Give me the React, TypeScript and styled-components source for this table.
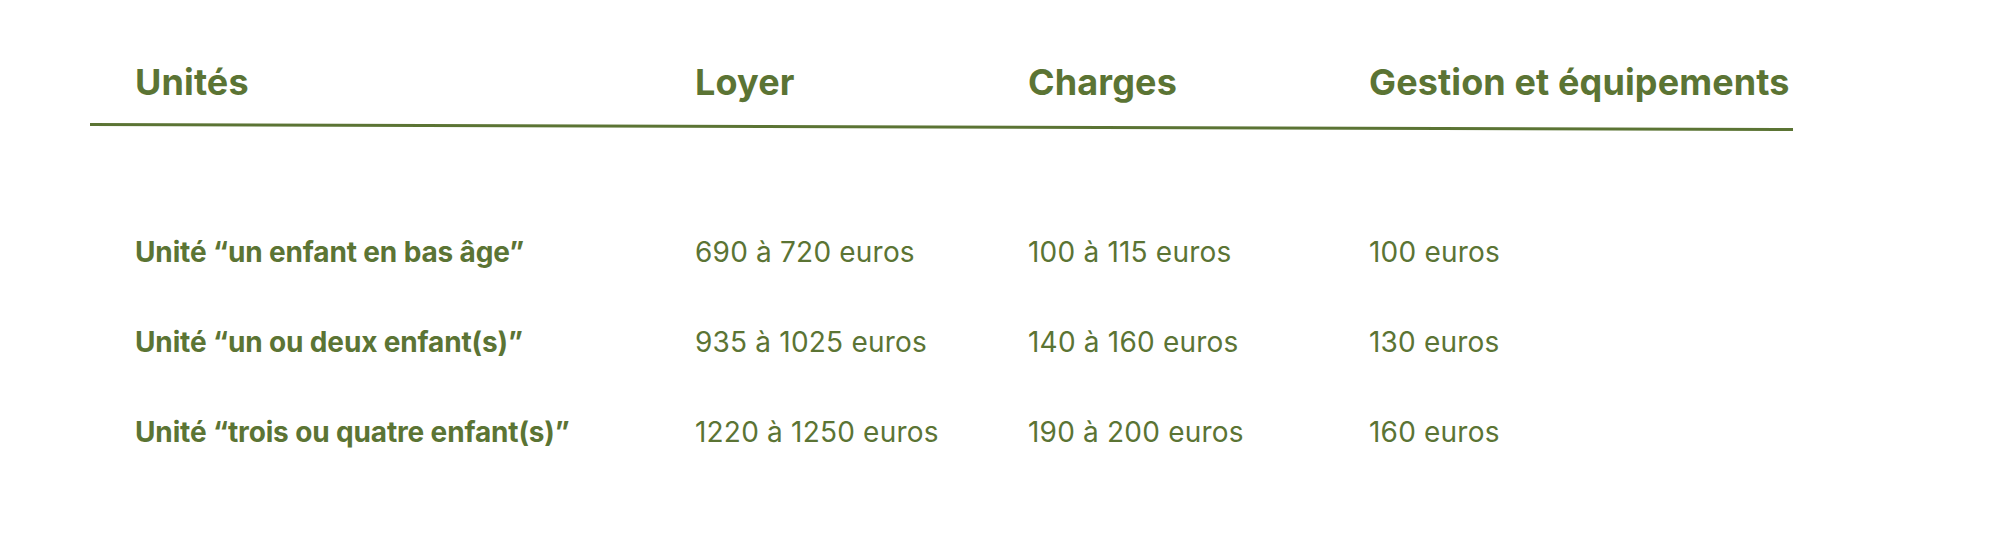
import React from 'react';
import styled, { createGlobalStyle } from 'styled-components';

const GlobalStyle = createGlobalStyle`
  html, body {
    margin: 0;
    padding: 0;
    background: #ffffff;
  }
  body {
    font-family: Inter, "Noto Sans", "Liberation Sans", sans-serif;
    color: #5b7434;
  }
`;

const Page = styled.div`
  width: 2000px;
  height: 544px;
  padding: 60px 0 0 90px;
  box-sizing: border-box;
`;

const Table = styled.div`
  width: 1703px;
`;

const Columns = styled.div`
  display: grid;
  grid-template-columns: 560px 333px 341px 1fr;
  padding-left: 45px;
`;

const HeadRow = styled(Columns)`
  font-size: 36px;
  line-height: 44px;
  font-weight: 700;
  letter-spacing: 0.12px;
`;

const Rule = styled.div`
  height: 3px;
  margin-top: 19px;
  background: #5b7434;
  transform: rotate(0.17deg);
  transform-origin: left center;
`;

const Body = styled.div`
  display: flex;
  flex-direction: column;
  gap: 58px;
  margin-top: 110px;
`;

const Row = styled(Columns)`
  font-size: 28px;
  line-height: 32px;
`;

const Cell = styled.div<{ $strong?: boolean }>`
  font-weight: ${(p) => (p.$strong ? 700 : 400)};
  letter-spacing: ${(p) => (p.$strong ? '-0.005em' : '0.2px')};
  white-space: nowrap;
`;

const HeadCell = styled.div`
  white-space: nowrap;
`;

const headers = ['Unités', 'Loyer', 'Charges', 'Gestion et équipements'];

const rows = [
  ['Unité “un enfant en bas âge”', '690 à 720 euros', '100 à 115 euros', '100 euros'],
  ['Unité “un ou deux enfant(s)”', '935 à 1025 euros', '140 à 160 euros', '130 euros'],
  ['Unité “trois ou quatre enfant(s)”', '1220 à 1250 euros', '190 à 200 euros', '160 euros'],
];

const App: React.FC = () => {
  return (
    <>
      <GlobalStyle />
      <Page>
        <Table>
          <HeadRow>
            {headers.map((h) => (
              <HeadCell key={h}>{h}</HeadCell>
            ))}
          </HeadRow>
          <Rule />
          <Body>
            {rows.map((r) => (
              <Row key={r[0]}>
                {r.map((c, i) => (
                  <Cell key={i} $strong={i === 0}>
                    {c}
                  </Cell>
                ))}
              </Row>
            ))}
          </Body>
        </Table>
      </Page>
    </>
  );
};

export default App;
